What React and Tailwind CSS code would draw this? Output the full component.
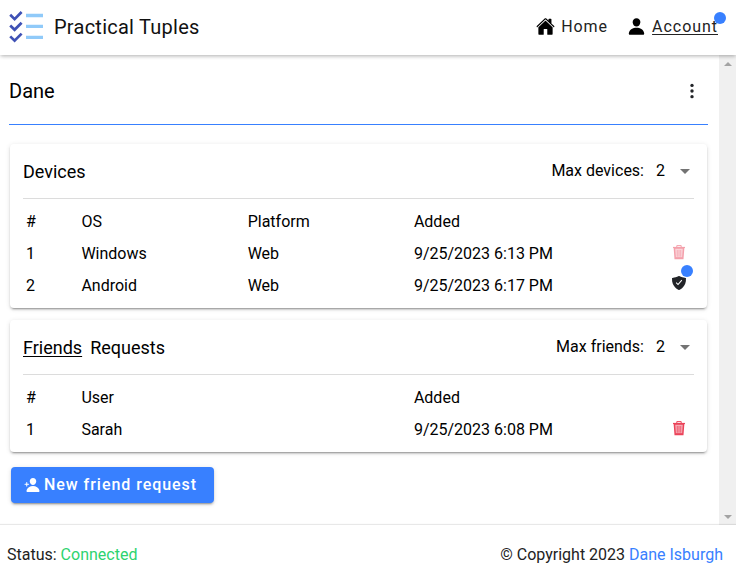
import { IoHome, IoPerson, IoPersonAdd, IoEllipsisVertical, IoShieldCheckmarkSharp } from "react-icons/io5";

function Logo() {
  return (
    <svg className="-mt-px" width="36" height="36" viewBox="0 0 36 36" fill="none">
      <g stroke="#90caf9" strokeWidth="3.4">
        <path d="M18 7.5h17M18 18.4h17M18 29.4h17" />
      </g>
      <g stroke="#3f51b5" strokeWidth="2.7">
        <path d="M2.2 6.8l4.4 4.3L13.6 4M2.2 17.5l4.4 4.3L13.6 14.7M2.2 28.4l4.4 4.3L13.6 25.6" />
      </g>
    </svg>
  );
}

function Trash({ className }) {
  return (
    <svg className={className} width="16" height="16" viewBox="0 0 16 16" fill="none" stroke="currentColor">
      <path d="M2 3.5h12" strokeWidth="1.2" />
      <path d="M5.8 3.2V1.6h4.4v1.6" />
      <path d="M3.4 3.9l.8 10.5h7.6l.8-10.5z" fill="currentColor" fillOpacity="0.45" strokeWidth="1.5" />
      <path d="M6.3 6v6.7M8 6v6.7M9.7 6v6.7" strokeWidth="0.7" />
      <path d="M4.5 13.9h7" strokeWidth="1.4" />
    </svg>
  );
}

function Card({ title, limit, className, children }) {
  return (
    <section className={`rounded bg-white px-[13px] shadow-[0_3px_1px_-2px_rgba(0,0,0,0.2),0_2px_2px_0_rgba(0,0,0,0.14),0_1px_5px_0_rgba(0,0,0,0.12)] ${className}`}>
      <div className="flex h-[55px] items-center justify-between border-b border-[#dcdcdc]">
        <h2 className="flex gap-2 pt-0.5 text-[18px] leading-6">{title}</h2>
        <div className="flex items-center pr-1">
          <span>{limit}</span>
          <span className="ml-3">2</span>
          <span className="ml-[15px] border-x-5 border-t-5 border-x-transparent border-t-[#737373]" />
        </div>
      </div>
      <div className="pl-[3px] pt-[7px]">{children}</div>
    </section>
  );
}

function Row({ cells, action }) {
  return (
    <div className="grid h-8 w-[665px] grid-cols-12 items-center">
      <span>{cells[0]}</span>
      <span className="col-span-3">{cells[1]}</span>
      <span className="col-span-3">{cells[2]}</span>
      <span className="col-span-4 whitespace-nowrap">{cells[3]}</span>
      <span className="flex justify-end pr-1">{action}</span>
    </div>
  );
}

export default function App() {
  return (
    <div className="flex h-[581px] w-[736px] flex-col overflow-hidden bg-white font-[Roboto,sans-serif] text-base text-black">
      <header className="relative z-10 flex h-[55px] shrink-0 items-center justify-between bg-white pb-[2px] pl-2 pr-[18px] shadow-[0_2px_4px_-1px_rgba(0,0,0,0.2),0_1px_4px_0_rgba(0,0,0,0.14)]">
        <div className="flex items-center gap-[10px]">
          <Logo />
          <h1 className="text-[20px] tracking-[0.25px] text-[#111]">Practical Tuples</h1>
        </div>
        <nav className="flex items-center text-[#222] tracking-[0.96px]">
          <a className="flex items-center gap-[6px]"><IoHome className="text-black" size={19} />Home</a>
          <a className="relative ml-[19px] flex items-center gap-[6px]">
            <IoPerson className="text-black" size={19} />
            <span className="underline underline-offset-2">Account</span>
            <span className="absolute -right-2 -top-[3px] size-3 rounded-full bg-[#3880ff]" />
          </a>
        </nav>
      </header>
      <div className="flex h-[470px] shrink-0">
        <main className="w-[719px] pl-[9px] pr-[11px]">
          <div className="flex h-[70px] items-center justify-between border-b border-[#3880ff]">
            <span className="pt-0.5 text-[20px]">Dane</span>
            <IoEllipsisVertical className="mr-[7px] mt-[3px] text-[#222428]" size={18} />
          </div>
          <Card className="ml-px mr-px mt-[19px] h-[164px]" title={<span>Devices</span>} limit="Max devices:">
            <Row cells={["#", "OS", "Platform", "Added"]} />
            <Row cells={["1", "Windows", "Web", "9/25/2023 6:13 PM"]} action={<Trash className="mb-1 text-[#eb445a] opacity-50" />} />
            <Row
              cells={["2", "Android", "Web", "9/25/2023 6:17 PM"]}
              action={
                <span className="relative mb-[6px]">
                  <IoShieldCheckmarkSharp className="text-[#222428]" size={16} />
                  <span className="absolute -right-[6px] -top-[10px] size-3 rounded-full bg-[#3880ff]" />
                </span>
              }
            />
          </Card>
          <Card
            className="ml-px mr-px mt-3 h-[132px]"
            title={<><span className="underline underline-offset-2">Friends</span><span>Requests</span></>}
            limit="Max friends:"
          >
            <Row cells={["#", "User", "", "Added"]} />
            <Row cells={["1", "Sarah", "", "9/25/2023 6:08 PM"]} action={<Trash className="mb-1 text-[#eb445a]" />} />
          </Card>
          <button className="ml-0.5 mt-[15px] flex h-9 w-[203px] items-center gap-1 rounded bg-[#3880ff] pl-[13px] font-medium tracking-[0.96px] text-white shadow-[0_3px_1px_-2px_rgba(0,0,0,0.2),0_2px_2px_0_rgba(0,0,0,0.14),0_1px_5px_0_rgba(0,0,0,0.12)]">
            <IoPersonAdd size={16} />
            <span className="whitespace-nowrap">New friend request</span>
          </button>
        </main>
        <div className="flex w-[17px] flex-col items-center justify-between bg-[#f0f0f0] pb-[6px] pt-[7px]">
          <span className="border-x-4 border-b-4 border-x-transparent border-b-[#a3a3a3]" />
          <span className="border-x-4 border-t-4 border-x-transparent border-t-[#a3a3a3]" />
        </div>
      </div>
      <footer className="relative flex h-14 items-center justify-between bg-white pl-[7px] pr-[13px] pt-[3px] text-[#222] shadow-[0_0_1px_1px_rgba(0,0,0,0.09)]">
        <span>Status: <span className="text-[#2dd36f]">Connected</span></span>
        <span>© Copyright 2023 <span className="text-[#3880ff]">Dane Isburgh</span></span>
      </footer>
    </div>
  );
}
